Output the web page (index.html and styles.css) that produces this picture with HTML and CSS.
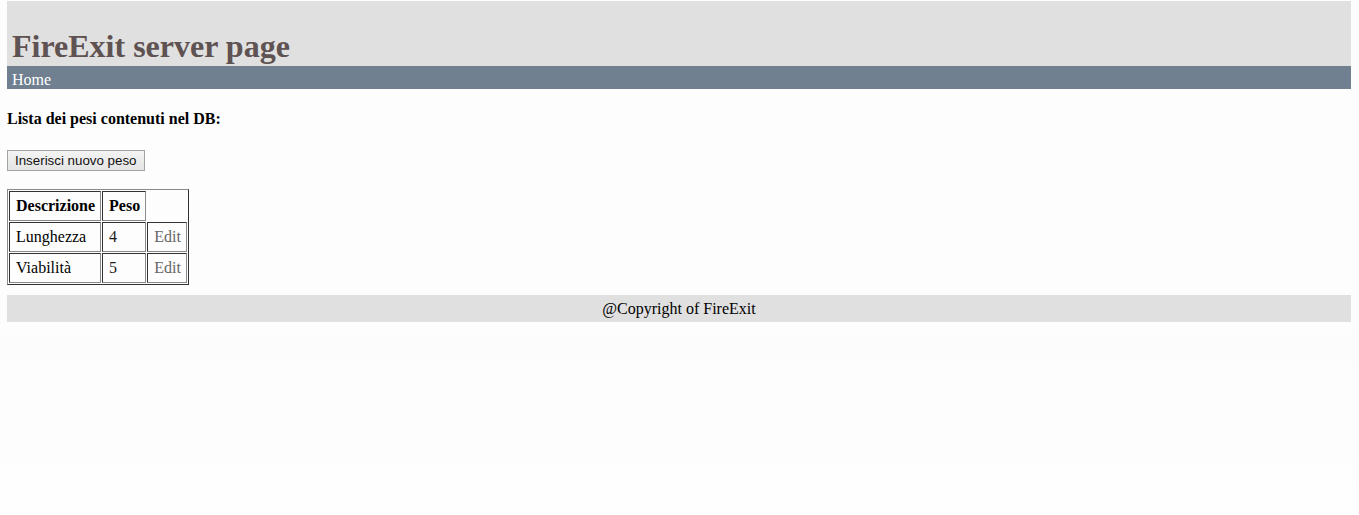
FILE: index.html
```html
<!DOCTYPE html>
<html lang="it">
<head>
<meta charset="utf-8">
<title>FireExit server page</title>
<link rel="stylesheet" href="styles.css">
</head>
<body>
<div class="page">
  <header class="header">
    <h1 class="title">FireExit server page</h1>
  </header>
  <nav class="nav"><a class="nav-link" href="#">Home</a></nav>
  <main class="content">
    <h4 class="list-title">Lista dei pesi contenuti nel DB:</h4>
    <button class="btn" type="button">Inserisci nuovo peso</button>
    <table class="weights">
      <tr>
        <th>Descrizione</th>
        <th>Peso</th>
      </tr>
      <tr>
        <td>Lunghezza</td>
        <td class="num">4</td>
        <td><a class="edit" href="#">Edit</a></td>
      </tr>
      <tr>
        <td>Viabilità</td>
        <td class="num">5</td>
        <td><a class="edit" href="#">Edit</a></td>
      </tr>
    </table>
  </main>
  <footer class="footer">@Copyright of FireExit</footer>
</div>
</body>
</html>
```
FILE: styles.css
```css
html {
  height: 100%;
  background: linear-gradient(to bottom, #f9f9f9, #fefefe);
}
body {
  margin: 0;
  font-family: "Liberation Serif", "Times New Roman", serif;
  font-size: 16px;
  color: #000;
}
.page {
  background: #fdfdfd;
  padding: 1px 8px 9px 7px;
}
.header {
  background: #e0e0e0;
  padding: 27px 5px 2px;
}
.title {
  margin: 0;
  font-size: 32px;
  line-height: 36px;
  font-weight: bold;
  color: #5f5252;
}
.nav {
  background: #708090;
  padding: 5px 5px 0;
  line-height: 18px;
}
.nav-link {
  color: #ffffff;
  text-decoration: none;
}
.content {
  display: flex;
  flex-direction: column;
  align-items: flex-start;
}
.list-title {
  margin: 21px 0 22px;
  font-size: 16px;
  line-height: 18px;
  font-weight: bold;
}
.btn {
  font-family: "Liberation Sans", Arial, sans-serif;
  font-size: 13.33px;
  line-height: 17px;
  height: 21px;
  padding: 1px 7px;
  color: #111;
  background: linear-gradient(to bottom, #f4f4f4, #e4e4e4);
  border: 1px solid #a3a3a3;
  border-radius: 0;
  margin: 0 0 18px;
}
.weights {
  border-collapse: separate;
  border-spacing: 1px;
  border: 1px solid;
  border-color: #8a8a8a #333 #333 #8a8a8a;
}
.weights th,
.weights td {
  border: 1px solid;
  border-color: #333 #8a8a8a #8a8a8a #333;
  padding: 5px 5px 5px 6px;
  line-height: 18px;
  text-align: left;
}
.weights th {
  font-weight: bold;
}
.num {
  color: #1a1a1a;
}
.edit {
  color: #666;
  text-decoration: none;
}
.footer {
  margin-top: 10px;
  background: #e0e0e0;
  padding: 5px 0 4px;
  line-height: 18px;
  text-align: center;
}
```
